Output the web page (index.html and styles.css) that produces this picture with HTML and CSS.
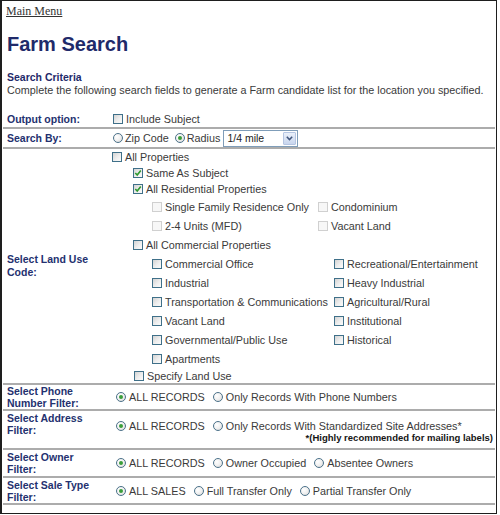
FILE: index.html
```html
<!DOCTYPE html>
<html>
<head>
<meta charset="utf-8">
<title>Farm Search</title>
<link rel="stylesheet" href="styles.css">
</head>
<body>
<div class="frame">
  <div class="topnav"><a href="#">Main Menu</a></div>
  <h1 class="title">Farm Search</h1>
  <div class="crit-title">Search Criteria</div>
  <div class="crit-desc">Complete the following search fields to generate a Farm candidate list for the location you specified.</div>

  <div class="form">
    <div class="row r-output">
      <div class="lbl">Output option:</div>
      <div class="ctl pad3"><label class="opt"><span class="cb"></span>Include Subject</label></div>
    </div>

    <div class="row r-search">
      <div class="lbl">Search By:</div>
      <div class="ctl pad3">
        <label class="opt"><span class="rb"></span>Zip Code</label>
        <label class="opt"><span class="rb on"></span>Radius</label>
        <span class="select">1/4 mile<span class="sel-btn"><svg width="7" height="5" viewBox="0 0 7 5"><polyline points="0.8,0.8 3.5,3.6 6.2,0.8" fill="none" stroke="#3f557d" stroke-width="1.5"/></svg></span></span>
      </div>
    </div>

    <div class="row r-land">
      <div class="lbl lbl13">Select Land Use<br>Code:</div>
      <div class="tree">
        <div class="trow h16 in0"><label class="opt"><span class="cb"></span>All Properties</label></div>
        <div class="trow h16 in1"><label class="opt"><span class="cb on"><svg width="8" height="8" viewBox="0 0 8 8"><polyline points="1.3,4 3.2,6 6.8,1.5" fill="none" stroke="#2f9a2f" stroke-width="1.6"/></svg></span>Same As Subject</label></div>
        <div class="trow h16 in1"><label class="opt"><span class="cb on"><svg width="8" height="8" viewBox="0 0 8 8"><polyline points="1.3,4 3.2,6 6.8,1.5" fill="none" stroke="#2f9a2f" stroke-width="1.6"/></svg></span>All Residential Properties</label></div>
        <div class="trow h19 two res">
          <label class="opt"><span class="cb dis"></span>Single Family Residence Only</label>
          <label class="opt"><span class="cb dis"></span>Condominium</label>
        </div>
        <div class="trow h19 two res">
          <label class="opt"><span class="cb dis"></span>2-4 Units (MFD)</label>
          <label class="opt"><span class="cb dis"></span>Vacant Land</label>
        </div>
        <div class="trow h19 in1"><label class="opt"><span class="cb"></span>All Commercial Properties</label></div>
        <div class="trow h19 two com">
          <label class="opt"><span class="cb"></span>Commercial Office</label>
          <label class="opt"><span class="cb"></span>Recreational/Entertainment</label>
        </div>
        <div class="trow h19 two com">
          <label class="opt"><span class="cb"></span>Industrial</label>
          <label class="opt"><span class="cb"></span>Heavy Industrial</label>
        </div>
        <div class="trow h19 two com">
          <label class="opt"><span class="cb"></span>Transportation &amp; Communications</label>
          <label class="opt"><span class="cb"></span>Agricultural/Rural</label>
        </div>
        <div class="trow h19 two com">
          <label class="opt"><span class="cb"></span>Vacant Land</label>
          <label class="opt"><span class="cb"></span>Institutional</label>
        </div>
        <div class="trow h19 two com">
          <label class="opt"><span class="cb"></span>Governmental/Public Use</label>
          <label class="opt"><span class="cb"></span>Historical</label>
        </div>
        <div class="trow h19 two com">
          <label class="opt"><span class="cb"></span>Apartments</label>
        </div>
        <div class="trow h15 in1b"><label class="opt"><span class="cb"></span>Specify Land Use</label></div>
      </div>
    </div>

    <div class="row r-phone">
      <div class="lbl">Select Phone<br>Number Filter:</div>
      <div class="ctl pad6">
        <label class="opt"><span class="rb on"></span>ALL RECORDS</label>
        <label class="opt"><span class="rb"></span>Only Records With Phone Numbers</label>
      </div>
    </div>

    <div class="row r-address">
      <div class="lbl top">Select Address<br>Filter:</div>
      <div class="ctl-col">
        <div class="ctl pad6 line13">
          <label class="opt"><span class="rb on"></span>ALL RECORDS</label>
          <label class="opt"><span class="rb"></span>Only Records With Standardized Site Addresses*</label>
        </div>
        <div class="note">*(Highly recommended for mailing labels)</div>
      </div>
    </div>

    <div class="row r-owner">
      <div class="lbl">Select Owner<br>Filter:</div>
      <div class="ctl pad6">
        <label class="opt"><span class="rb on"></span>ALL RECORDS</label>
        <label class="opt"><span class="rb"></span>Owner Occupied</label>
        <label class="opt"><span class="rb"></span>Absentee Owners</label>
      </div>
    </div>

    <div class="row r-sale">
      <div class="lbl">Select Sale Type<br>Filter:</div>
      <div class="ctl pad6">
        <label class="opt"><span class="rb on"></span>ALL SALES</label>
        <label class="opt"><span class="rb"></span>Full Transfer Only</label>
        <label class="opt"><span class="rb"></span>Partial Transfer Only</label>
      </div>
    </div>
  </div>
</div>
</body>
</html>
```
FILE: styles.css
```css
body {
  margin: 0;
  background: #ffffff;
}

.frame {
  width: 494px;
  height: 512px;
  border: 1px solid #1e1e1e;
  border-left-width: 2px;
  overflow: hidden;
  font-family: "Liberation Sans", Arial, sans-serif;
  color: #3a3a3a;
  background: #ffffff;
}

.topnav {
  padding: 3px 0 0 4px;
  font: 12px/14px "Liberation Serif", "Times New Roman", serif;
}

.topnav a {
  color: #333333;
  text-decoration: underline;
}

.title {
  margin: 15px 0 0 5px;
  font: bold 20px/23px "Liberation Sans", Arial, sans-serif;
  color: #1f2a6a;
}

.crit-title {
  margin: 15px 0 0 5px;
  font: bold 10.5px/13px "Liberation Sans", Arial, sans-serif;
  color: #1f2a6a;
}

.crit-desc {
  margin-left: 5px;
  font: 10.8px/13px "Liberation Sans", Arial, sans-serif;
  color: #3a3a3a;
}

.form {
  margin: 14px 1px 0 1px;
}

.row {
  display: grid;
  grid-template-columns: 107px 1fr;
  border-bottom: 2px solid #acacac;
}

.lbl {
  align-self: center;
  padding-left: 4px;
  font: bold 10.5px/12px "Liberation Sans", Arial, sans-serif;
  color: #24316f;
}

.lbl13 {
  line-height: 13px;
}

.lbl.top {
  align-self: start;
  padding-top: 1px;
}

.ctl {
  display: flex;
  align-items: center;
}

.ctl-col {
  display: flex;
  flex-direction: column;
}

.pad3 { padding-left: 3px; }
.pad6 { padding-left: 6px; }

.r-output { height: 16px; }
.r-search { height: 18px; }
.r-land   { height: 234px; }
.r-phone  { height: 24px; }
.r-address { height: 37px; }
.r-owner  { height: 26px; }
.r-sale   { height: 25px; }

.r-output .ctl,
.r-search .ctl,
.r-phone .ctl,
.r-owner .ctl,
.r-sale .ctl {
  height: 100%;
}

.line13 {
  height: 13px;
  margin-top: 8px;
}

.note {
  text-align: right;
  padding-right: 2px;
  font: bold 9.5px/12px "Liberation Sans", Arial, sans-serif;
  color: #151515;
}

.opt {
  display: inline-flex;
  align-items: center;
  font-size: 10.8px;
  line-height: 12px;
  color: #3a3a3a;
  white-space: nowrap;
}

.ctl .opt + .opt {
  margin-left: 8px;
}

.r-search .ctl .opt + .opt {
  margin-left: 6px;
}

.cb {
  position: relative;
  display: inline-flex;
  align-items: center;
  justify-content: center;
  width: 10px;
  height: 10px;
  box-sizing: border-box;
  margin-right: 3px;
  border: 1px solid #3f7089;
  background: linear-gradient(135deg, #d3d3d3 0%, #eeeeee 55%, #fbfbfb 100%);
  flex: none;
}

.cb.dis {
  border-color: #d0d0d0;
  background: #f7f7f7;
}

.rb {
  position: relative;
  width: 10px;
  height: 10px;
  box-sizing: border-box;
  margin-right: 3px;
  border: 1px solid #4b7189;
  border-radius: 50%;
  background: radial-gradient(circle at 35% 35%, #ffffff 0%, #f0f0f0 50%, #d2d2d2 100%);
  flex: none;
}

.r-search .rb {
  margin-right: 2px;
}

.rb.on::after {
  content: "";
  position: absolute;
  left: 2px;
  top: 2px;
  width: 4px;
  height: 4px;
  border-radius: 50%;
  background: #3a9e3a;
}

.select {
  display: inline-flex;
  align-items: center;
  justify-content: space-between;
  width: 75px;
  height: 17px;
  box-sizing: border-box;
  margin-left: 3px;
  padding: 0 1px 0 3px;
  border: 1px solid #7f9db9;
  font-size: 10.5px;
  color: #222222;
  background: #ffffff;
}

.sel-btn {
  display: flex;
  align-items: center;
  justify-content: center;
  width: 13px;
  height: 13px;
  box-sizing: border-box;
  border: 1px solid #b5c5e2;
  border-radius: 1px;
  background: linear-gradient(#eaf0fa, #c9d6ee);
}

.tree {
  display: flex;
  flex-direction: column;
}

.trow {
  display: flex;
  align-items: center;
}

.h15 { height: 15px; }
.h16 { height: 16px; }
.h19 { height: 19px; }

.in0  { padding-left: 2px; }
.in1  { padding-left: 23px; }
.in1b { padding-left: 24px; }

.trow.two {
  display: grid;
  align-items: center;
  padding-left: 42px;
}

.trow.res { grid-template-columns: 166px 1fr; }
.trow.com { grid-template-columns: 182px 1fr; }
```
